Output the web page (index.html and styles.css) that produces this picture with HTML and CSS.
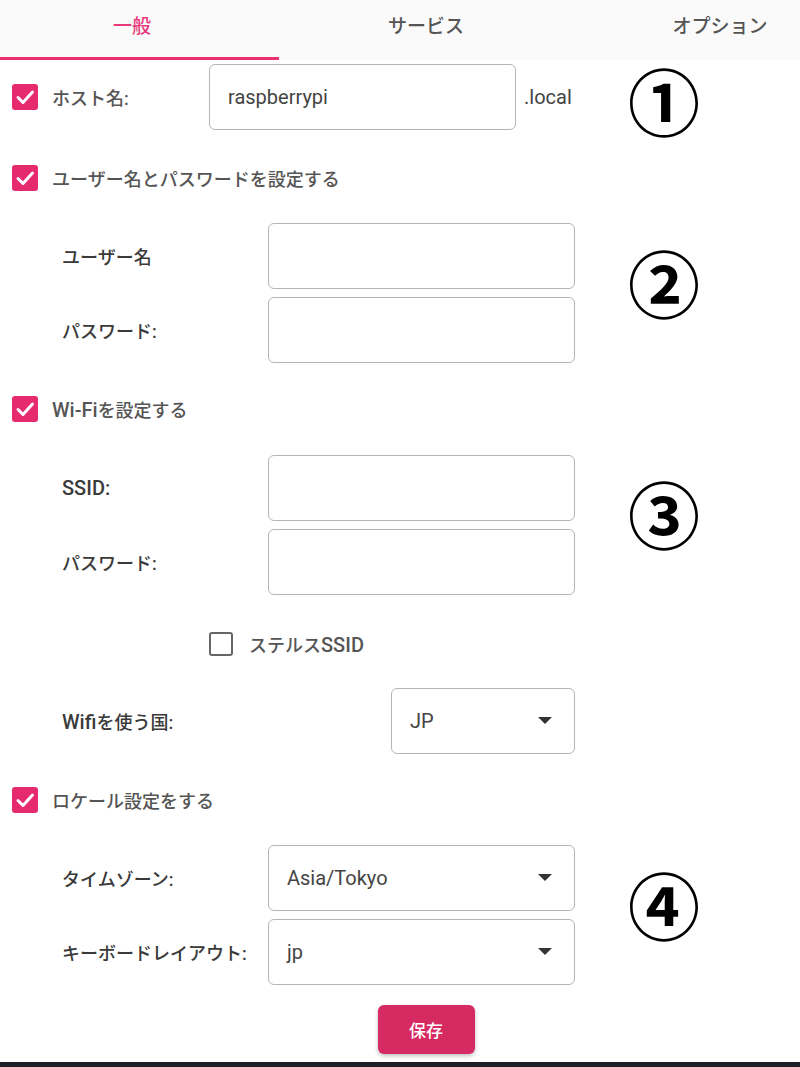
FILE: index.html
```html
<!DOCTYPE html>
<html lang="ja">
<head>
    <meta charset="UTF-8">
    <meta name="viewport" content="width=device-width, initial-scale=1.0">
    <title>OSカスタマイズ</title>
    <link rel="stylesheet" href="styles.css">
</head>
<body>
    <div class="dialog">
        <!-- タブ -->
        <nav class="tabs">
            <div class="tab active">一般</div>
            <div class="tab">サービス</div>
            <div class="tab last">オプション</div>
        </nav>

        <div class="panel">
            <!-- ① ホスト名 -->
            <div class="group g1">
                <div class="rows">
                    <div class="host-row">
                        <span class="check on"><svg viewBox="0 0 26 26"><polyline points="6,13.5 11,18.5 20.5,8"/></svg></span>
                        <span class="check-label host-label">ホスト名:</span>
                        <input class="box host-input" type="text" value="raspberrypi">
                        <span class="suffix">.local</span>
                    </div>
                </div>
                <div class="num">①</div>
            </div>

            <!-- ② ユーザー -->
            <div class="check-row first">
                <span class="check on"><svg viewBox="0 0 26 26"><polyline points="6,13.5 11,18.5 20.5,8"/></svg></span>
                <span class="check-label">ユーザー名とパスワードを設定する</span>
            </div>
            <div class="group">
                <div class="rows fields">
                    <div class="field">
                        <label class="field-label">ユーザー名</label>
                        <input class="box" type="text">
                    </div>
                    <div class="field">
                        <label class="field-label">パスワード:</label>
                        <input class="box" type="password">
                    </div>
                </div>
                <div class="num">②</div>
            </div>

            <!-- ③ Wi-Fi -->
            <div class="check-row">
                <span class="check on"><svg viewBox="0 0 26 26"><polyline points="6,13.5 11,18.5 20.5,8"/></svg></span>
                <span class="check-label"><span class="lat">Wi-Fi</span>を設定する</span>
            </div>
            <div class="group">
                <div class="rows fields wifi">
                    <div class="field">
                        <label class="field-label lat">SSID:</label>
                        <input class="box" type="text">
                    </div>
                    <div class="field">
                        <label class="field-label">パスワード:</label>
                        <input class="box" type="password">
                    </div>
                </div>
                <div class="num">③</div>
            </div>
            <div class="stealth-row">
                <span class="check off"></span>
                <span class="check-label">ステルス<span class="lat">SSID</span></span>
            </div>
            <div class="field country">
                <label class="field-label"><span class="lat">Wifi</span>を使う国:</label>
                <div class="box select small">
                    <span>JP</span>
                    <svg class="arrow" viewBox="0 0 14 8"><polygon points="0,0 14,0 7,7"/></svg>
                </div>
            </div>

            <!-- ④ ロケール -->
            <div class="check-row">
                <span class="check on"><svg viewBox="0 0 26 26"><polyline points="6,13.5 11,18.5 20.5,8"/></svg></span>
                <span class="check-label">ロケール設定をする</span>
            </div>
            <div class="group">
                <div class="rows fields">
                    <div class="field">
                        <label class="field-label">タイムゾーン:</label>
                        <div class="box select">
                            <span>Asia/Tokyo</span>
                            <svg class="arrow" viewBox="0 0 14 8"><polygon points="0,0 14,0 7,7"/></svg>
                        </div>
                    </div>
                    <div class="field">
                        <label class="field-label">キーボードレイアウト:</label>
                        <div class="box select">
                            <span>jp</span>
                            <svg class="arrow" viewBox="0 0 14 8"><polygon points="0,0 14,0 7,7"/></svg>
                        </div>
                    </div>
                </div>
                <div class="num">④</div>
            </div>

            <div class="actions">
                <button class="save" type="button">保存</button>
            </div>
        </div>
    </div>
    <div class="taskbar"></div>
</body>
</html>
```

FILE: styles.css
```css
* {
    margin: 0;
    padding: 0;
    box-sizing: border-box;
}

body {
    background: #fff;
    font-family: Roboto, "Noto Sans CJK JP", sans-serif;
    color: #444;
    overflow: hidden;
}

.dialog {
    width: 800px;
}

/* タブ（右端は画面外に切れている） */
.tabs {
    display: flex;
    height: 60px;
    background: #fafafa;
}

.tab {
    width: 294px;
    height: 60px;
    display: flex;
    align-items: center;
    justify-content: center;
    padding-bottom: 8px;
    font-size: 19px;
    font-weight: 500;
    color: #555;
    border-bottom: 3px solid transparent;
}

.tab.active {
    width: 279px;
    padding-right: 15px;
    color: #e8397a;
    border-bottom-color: #ec2f72;
}

.tab.last {
    width: 227px;
    padding-left: 67px;
}

/* パネル */
.panel {
    padding: 4px 0 0 12px;
}

.group {
    display: flex;
    align-items: center;
}

.rows {
    width: 589px;
    flex: none;
}

.num {
    width: 70px;
    margin-left: 27px;
    font-family: "Noto Sans CJK JP", sans-serif;
    font-size: 72px;
    font-weight: 700;
    line-height: 1;
    color: #000;
    text-align: center;
}

.g1 .num {
    margin-top: -1px;
    margin-bottom: -5px;
}

.lat {
    font-size: 20px;
}

/* チェックボックス */
.check {
    width: 26px;
    height: 26px;
    border-radius: 3px;
    flex: none;
    display: flex;
}

.check.on {
    background: #e62a6e;
}

.check.on svg {
    width: 26px;
    height: 26px;
    fill: none;
    stroke: #fff;
    stroke-width: 3;
    stroke-linecap: round;
    stroke-linejoin: round;
}

.check.off {
    width: 24px;
    height: 24px;
    border: 2px solid #666;
}

.check-label {
    margin-left: 14px;
    font-size: 18px;
    font-weight: 500;
    color: #555;
}

.check-row {
    display: flex;
    align-items: center;
    height: 40px;
    margin-top: 26px;
}

.check-row.first {
    margin-top: 28px;
}

/* ホスト名 */
.host-row {
    display: flex;
    align-items: center;
}

.host-label {
    width: 157px;
}

.suffix {
    margin-left: 8px;
    font-size: 20px;
    color: #444;
}

/* 入力欄 */
.box {
    width: 307px;
    height: 66px;
    border: 1px solid #b5b5b5;
    border-radius: 6px;
    background: #fff;
    font-family: Roboto, "Noto Sans CJK JP", sans-serif;
    font-size: 20px;
    color: #444;
    padding: 0 18px;
    outline: none;
    flex: none;
}

.fields {
    margin-top: 25px;
    display: flex;
    flex-direction: column;
    gap: 8px;
}

.fields.wifi {
    margin-top: 26px;
}

.field {
    display: flex;
    align-items: center;
    padding-left: 50px;
}

.field-label {
    width: 206px;
    font-size: 18px;
    font-weight: 500;
    color: #3a3a3a;
}

.field-label.lat {
    font-size: 20px;
}

.select {
    display: flex;
    align-items: center;
    justify-content: space-between;
    padding-right: 22px;
}

.select.small {
    width: 184px;
}

.arrow {
    width: 14px;
    height: 8px;
    fill: #333;
}

.stealth-row {
    display: flex;
    align-items: center;
    height: 40px;
    margin-top: 29px;
    padding-left: 197px;
}

.stealth-row .check-label {
    margin-left: 16px;
}

.country {
    margin-top: 24px;
}

.country .field-label {
    width: 329px;
}

/* 保存ボタン */
.actions {
    display: flex;
    justify-content: center;
    margin-top: 20px;
    padding-left: 40px;
}

.save {
    width: 97px;
    height: 49px;
    border: none;
    border-radius: 6px;
    background: #d52a62;
    color: #fff;
    font-family: "Noto Sans CJK JP", sans-serif;
    font-size: 17px;
    font-weight: 500;
    box-shadow: 0 2px 4px rgba(0, 0, 0, 0.25);
}

.taskbar {
    margin-top: 8px;
    height: 6px;
    background: #1c1f24;
}
```
